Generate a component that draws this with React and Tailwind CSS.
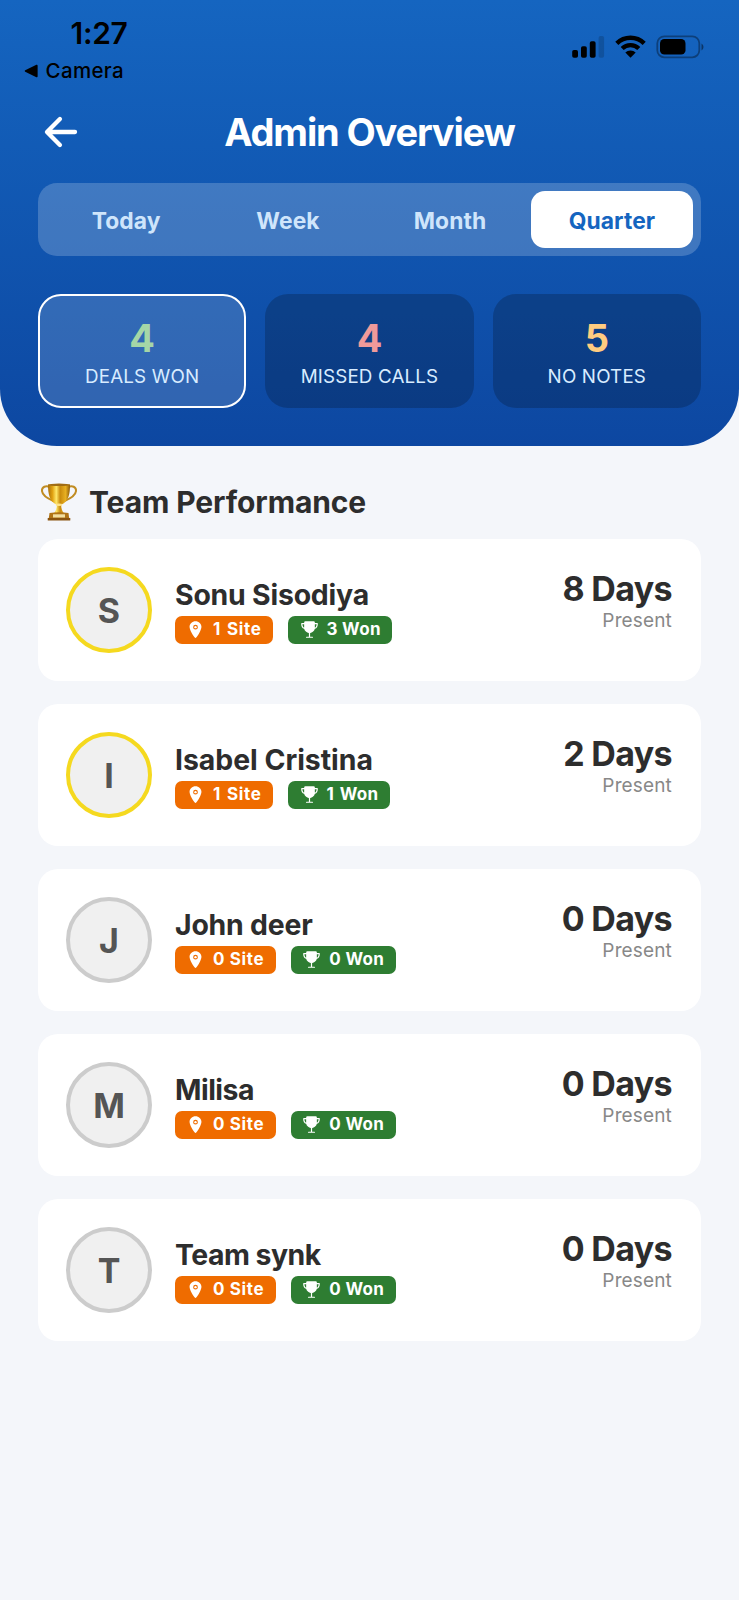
import { useState } from "react";
import { IoArrowBack, IoLocation, IoTrophy } from "react-icons/io5";

const PERIODS = ["Today", "Week", "Month", "Quarter"];

const STATS = [
  { id: "won", value: 4, label: "DEALS WON", color: "text-[#a5d6a7]" },
  { id: "missed", value: 4, label: "MISSED CALLS", color: "text-[#ef9a9a]" },
  { id: "notes", value: 5, label: "NO NOTES", color: "text-[#ffcc80]" },
];

const TEAM = [
  { name: "Sonu Sisodiya", sites: 1, won: 3, days: 8, tracking: "tracking-[-0.2px]" },
  { name: "Isabel Cristina", sites: 1, won: 1, days: 2, tracking: "tracking-[-0.02px]" },
  { name: "John deer", sites: 0, won: 0, days: 0, tracking: "tracking-[-0.2px]" },
  { name: "Milisa", sites: 0, won: 0, days: 0, tracking: "tracking-[-0.5px]" },
  { name: "Team synk", sites: 0, won: 0, days: 0, tracking: "tracking-[-0.5px]" },
];

function StatusBar() {
  return (
    <div className="flex h-[88px] justify-between text-black">
      <div className="pl-6 pt-4">
        <div className="pl-[46.5px] text-[30px] font-semibold leading-[34px] tracking-[-0.3px]">1:27</div>
        <div className="mt-[10px] flex items-center gap-[7.5px] text-[20.5px] font-medium leading-[22px] tracking-[0.35px]">
          <svg width="14" height="14" viewBox="0 0 14 14" aria-hidden="true">
            <path d="M1.2 6.2 12.4.8q1.2-.4 1.2.9v10.6q0 1.3-1.2.9L1.2 7.8Q0 7 1.2 6.2Z" />
          </svg>
          Camera
        </div>
      </div>
      <div className="flex items-start gap-[10px] pr-[35px] pt-[35px]">
        <svg width="33" height="24" viewBox="0 0 33 24" aria-hidden="true">
          <rect x="0.2" y="15" width="5.8" height="7.7" rx="1.8" />
          <rect x="9" y="11.3" width="5.8" height="11.4" rx="1.8" />
          <rect x="17.8" y="6.2" width="5.8" height="16.5" rx="1.8" />
          <rect x="26.6" y="1" width="5.5" height="21.7" rx="1.8" opacity="0.16" />
        </svg>
        <svg width="31" height="24" viewBox="0 0 31 24" aria-hidden="true">
          <g fill="none" stroke="black" strokeWidth="4.4">
            <path d="M1.8 8.4a19.6 19.6 0 0 1 27.4 0" />
            <path d="M7.2 13.5a12 12 0 0 1 16.6 0" />
          </g>
          <path d="M10.3 17.5a7.6 7.6 0 0 1 10.4 0L15.5 22.7Z" />
        </svg>
        <svg width="48" height="24" viewBox="0 0 48 24" aria-hidden="true">
          <rect x="1.3" y="1.3" width="42" height="21" rx="7" fill="none" stroke="black" strokeOpacity="0.35" strokeWidth="1.8" />
          <rect x="4" y="4" width="25.5" height="15.6" rx="4.4" />
          <path d="M45.5 8.5v7q2-1 2-3.5t-2-3.5Z" opacity="0.45" />
        </svg>
      </div>
    </div>
  );
}

function TrophyEmoji() {
  return (
    <svg width="38" height="38" viewBox="0 0 38 38" aria-hidden="true">
      <defs>
        <linearGradient id="cup">
          <stop offset="0" stopColor="#a8700c" />
          <stop offset="0.2" stopColor="#e0a010" />
          <stop offset="0.38" stopColor="#ffe768" />
          <stop offset="0.55" stopColor="#c98a0c" />
          <stop offset="0.8" stopColor="#e8b022" />
          <stop offset="1" stopColor="#8c5a08" />
        </linearGradient>
      </defs>
      <g fill="none" stroke="#c08c22" strokeWidth="2">
        <path d="M10 4.4C6 1.8 1.5 4 2 8.2c.5 4 4.5 7 11.5 9.8" />
        <path d="M28 4.4C32 1.8 36.5 4 36 8.2c-.5 4-4.5 7-11.5 9.8" />
      </g>
      <path d="M8 1.5c0 9.5 1.5 17 8.5 20 1 2-.5 7-3.5 10h12c-3-3-4.5-8-3.5-10 7-3 8.5-10.5 8.5-20Z" fill="url(#cup)" />
      <ellipse cx="19" cy="1.8" rx="11" ry="1.3" fill="#a06c14" />
      <ellipse cx="19" cy="21.7" rx="3.3" ry="1.2" fill="#ffe48a" />
      <path d="M9.5 30q9.500-1.500 19 0l.8 6H8.700Z" fill="#b07416" />
      <rect x="13" y="31.3" width="12" height="3.2" fill="#f2dfa0" />
      <rect x="7.7" y="35" width="22.6" height="2.5" rx="0.5" fill="#8a5410" />
    </svg>
  );
}

function Badge({ icon: Icon, className, count, label }) {
  return (
    <span className={`flex h-7 items-center gap-2 rounded-[7px] pl-[11.5px] pr-[11.5px] text-[17px] font-bold text-white ${className}`}>
      <Icon size={19} />
      {/* the digit 1 is narrow, so it gets a slightly wider word gap */}
      <span className={count === 1 ? "[word-spacing:1.3px]" : ""}>
        {count} {label}
      </span>
    </span>
  );
}

function MemberCard({ member }) {
  const ring = member.days > 0 ? "border-[#f5d91f]" : "border-[#cccccc]";

  return (
    <li className="flex h-[142px] items-center rounded-[20px] bg-white pl-[28px] pr-[29px]">
      <div className={`flex size-[86px] items-center justify-center rounded-full border-4 bg-[#f0f0f0] text-[34px] font-bold text-[#555555] ${ring}`}>
        {member.name[0]}
      </div>
      <div className="ml-[22.5px] flex-1 pb-px">
        <div className={`pl-[0.5px] text-[28.4px] font-bold leading-[38px] ${member.tracking}`}>{member.name}</div>
        <div className="mt-[2px] flex gap-[15px]">
          <Badge icon={IoLocation} className="bg-[#ef6c00] tracking-[0.65px]" count={member.sites} label="Site" />
          <Badge icon={IoTrophy} className="bg-[#2e7d32] tracking-[0.3px]" count={member.won} label="Won" />
        </div>
      </div>
      <div className="self-start pt-[30px] text-right">
        <div className="text-[34px] font-bold leading-[40px] tracking-[-0.65px]">{member.days} Days</div>
        <div className="text-[19px] leading-[24px] tracking-[0.15px] text-[#888888]">Present</div>
      </div>
    </li>
  );
}

export default function App() {
  const [period, setPeriod] = useState("Quarter");
  const [stat, setStat] = useState("won");

  return (
    <div className="min-h-[1600px] w-full bg-[#f4f6fa] font-['Inter','Liberation_Sans',sans-serif] text-[#2d2d2d]">
      <header className="h-[445.5px] rounded-b-[57px] bg-linear-to-b from-[#1565c0] to-[#0d47a1]">
        <StatusBar />

        <div className="flex h-[95px] items-center px-[38px] pb-[7px] text-white">
          <button className="flex w-[46px] justify-center" aria-label="Back">
            <IoArrowBack size={46} />
          </button>
          <h1 className="flex-1 text-center text-[38px] font-bold leading-[46px] tracking-[-1.15px]">Admin Overview</h1>
          <div className="w-[46px]" />
        </div>

        <nav className="mx-[38px] flex h-[73px] rounded-[19px] bg-white/20 p-[7.6px]">
          {PERIODS.map((label) => (
            <button
              key={label}
              onClick={() => setPeriod(label)}
              className={`flex-1 rounded-[14px] pr-px pt-[3px] text-[22.8px] font-bold tracking-[0.1px] ${
                period === label ? "bg-white text-[#1565c0]" : "text-[#cfe5fb]"
              }`}
            >
              {label}
            </button>
          ))}
        </nav>

        <div className="mx-[38px] mt-[38px] flex gap-[19px]">
          {STATS.map(({ id, value, label, color }) => (
            <button
              key={id}
              onClick={() => setStat(id)}
              className={`flex h-[114px] flex-1 flex-col items-center rounded-[23px] border-2 pt-[20px] ${
                stat === id ? "border-white bg-white/15" : "border-transparent bg-black/20"
              }`}
            >
              <span className={`text-[38px] font-bold leading-[44px] ${color}`}>{value}</span>
              <span className="mt-[3px] text-[18.8px] leading-[28px] tracking-[0.15px] text-[#d8ecff]">{label}</span>
            </button>
          ))}
        </div>
      </header>

      <main className="px-[38px] pt-[37px]">
        <h2 className="flex items-center gap-[11px] pl-[2px] text-[30px] font-bold leading-[38px] tracking-[-0.1px]">
          <TrophyEmoji />
          Team Performance
        </h2>
        <ul className="mt-[18.5px] flex flex-col gap-[23px]">
          {TEAM.map((member) => (
            <MemberCard key={member.name} member={member} />
          ))}
        </ul>
      </main>
    </div>
  );
}
